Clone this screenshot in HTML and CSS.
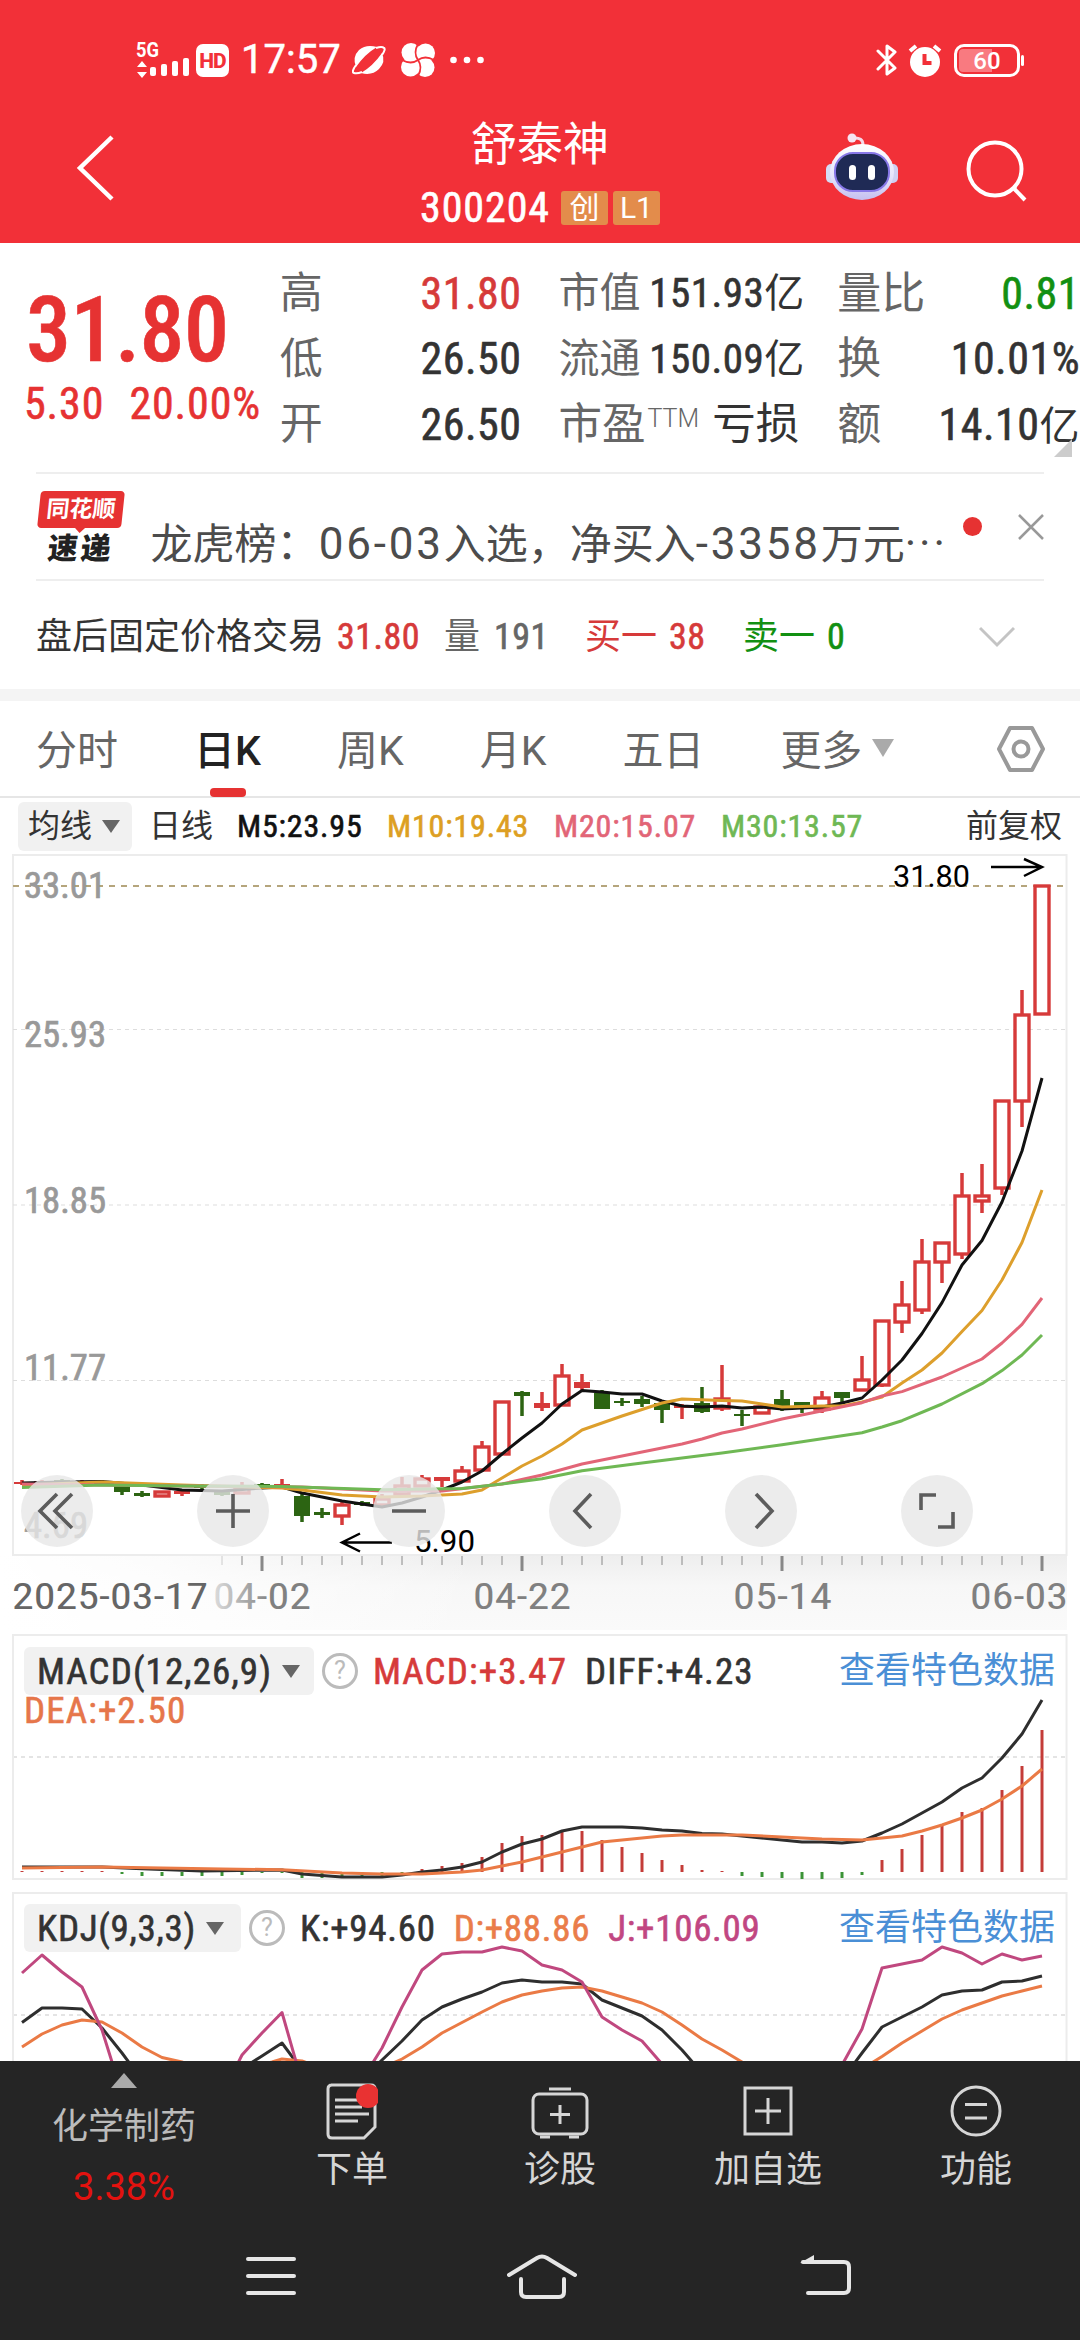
FILE: index.html
```html
<!DOCTYPE html>
<html lang="zh-CN">
<head>
  <meta charset="UTF-8">
  <title>舒泰神 300204</title>
  <link rel="stylesheet" href="styles.css">
</head>
<body>
  <header class="top">
    <div class="status">
      <svg class="signal" width="54" height="38" viewBox="0 0 54 38" fill="#fff">
        <text x="0" y="16" class="net" textLength="23" lengthAdjust="spacingAndGlyphs">5G</text>
        <path d="M6 20l5 6H1zM6 37l5-6H1z"/>
        <rect x="14" y="26" width="6" height="9" rx="2"/><rect x="25" y="23" width="6" height="12" rx="2"/>
        <rect x="36" y="20" width="6" height="15" rx="2"/><rect x="47" y="17" width="6" height="18" rx="2"/>
      </svg>
      <span class="hd">HD</span>
      <span class="clock">17:57</span>
      <svg class="planet" width="34" height="32" viewBox="0 0 34 32" fill="#fff">
        <path d="M4 23Q0 13 7 6Q14 0 25 3Q13 10 4 23z"/>
        <path d="M30 9Q34 18 27 25Q20 32 9 29Q21 22 30 9z"/>
        <path d="M4 21Q-1 28 2 29M30 11Q34 5 32 4Q30 2 24 4M2 29Q5 30 10 28" fill="none" stroke="#fff" stroke-width="2"/>
      </svg>
      <svg class="clover" width="34" height="34" viewBox="0 0 34 34">
        <g fill="#fff"><circle cx="10" cy="9.500" r="9.500"/><circle cx="24.500" cy="10" r="9.500"/><circle cx="24" cy="24.500" r="9.500"/><circle cx="9.500" cy="24" r="9.500"/></g>
        <path d="M17 17Q10 22 1 17M17 17Q12 10 17 1M17 17Q24 12 33 17M17 17Q22 24 17 33" fill="none" stroke="#f23038" stroke-width="1.800"/>
      </svg>
      <svg class="more" width="34" height="8" viewBox="0 0 34 8" fill="#fff"><circle cx="3.500" cy="4" r="3.300"/><circle cx="17" cy="4" r="3.300"/><circle cx="30.500" cy="4" r="3.300"/></svg>
      <svg class="bt" width="22" height="34" viewBox="0 0 22 34" fill="none" stroke="#fff" stroke-width="3" stroke-linejoin="round" stroke-linecap="round"><path d="M2 8L19 25L11 31V3L19 9L2 26"/></svg>
      <svg class="alarm" width="34" height="34" viewBox="0 0 34 34"><circle cx="17" cy="19" r="15" fill="#fff"/><path d="M2 8L8 3M26 3L32 8" stroke="#fff" stroke-width="4"/><path d="M16.500 11V20H23.500" fill="none" stroke="#f23038" stroke-width="4"/></svg>
      <span class="battery"><i></i><b>60</b></span>
    </div>
    <div class="titlebar">
      <svg class="back" width="40" height="66" viewBox="0 0 40 66" fill="none" stroke="#fff" stroke-width="4.500"><path d="M36 2L4 33L36 64"/></svg>
      <div class="title">
        <h1>舒泰神</h1>
        <div class="code"><span class="num">300204</span><em>创</em><em>L1</em></div>
      </div>
      <svg class="robot" width="74" height="68" viewBox="0 0 74 68">
        <defs><linearGradient id="head" x2="0" y2="1"><stop offset="0" stop-color="#fff"/><stop offset=".6" stop-color="#e4e2fb"/><stop offset="1" stop-color="#c5bff0"/></linearGradient></defs>
        <path d="M38 12Q38 4 28 5" fill="none" stroke="#f5d9e8" stroke-width="3"/><circle cx="27" cy="5" r="4.500" fill="#f6e4f2"/>
        <rect x="1" y="31" width="12" height="19" rx="5" fill="#d5dcf5"/><rect x="61" y="31" width="12" height="19" rx="5" fill="#cfd0f3"/>
        <ellipse cx="37" cy="39" rx="32" ry="28" fill="url(#head)"/>
        <rect x="10" y="20" width="54" height="38" rx="18" fill="#1f2a55" stroke="#8878e8" stroke-width="2"/>
        <rect x="24" y="32" width="7" height="15" rx="3.500" fill="#fff"/><rect x="43" y="32" width="7" height="15" rx="3.500" fill="#fff"/>
      </svg>
      <svg class="search" width="62" height="62" viewBox="0 0 62 62" fill="none" stroke="#fff" stroke-width="4"><circle cx="29" cy="29" r="26.500"/><path d="M47.500 48L59 60"/></svg>
    </div>
  </header>

  <section class="quote">
    <div class="last">
      <div class="price num">31.80</div>
      <div class="change num"><span>5.30</span><span>20.00%</span></div>
    </div>
    <dl class="stats s1">
      <dt>高</dt><dd class="num red">31.80</dd>
      <dt>低</dt><dd class="num">26.50</dd>
      <dt>开</dt><dd class="num">26.50</dd>
    </dl>
    <dl class="stats s2">
      <dt>市值</dt><dd class="num">151.93<small>亿</small></dd>
      <dt>流通</dt><dd class="num">150.09<small>亿</small></dd>
      <dt class="pe">市盈<sup>TTM</sup></dt><dd class="loss">亏损</dd>
    </dl>
    <dl class="stats s3">
      <dt>量比</dt><dd class="num green">0.81</dd>
      <dt>换</dt><dd class="num">10.01%</dd>
      <dt>额</dt><dd class="num">14.10<small>亿</small></dd>
    </dl>
    <i class="corner"></i>
  </section>

  <section class="news">
    <div class="logo"><b>同花顺</b><strong>速递</strong></div>
    <p>龙虎榜：<span>06-03</span>入选，净买入<span>-3358</span>万元<span>···</span></p>
    <i class="dot"></i>
    <svg width="26" height="26" viewBox="0 0 26 26" stroke="#999" stroke-width="2.500"><path d="M1 1L25 25M25 1L1 25"/></svg>
  </section>

  <section class="after">
    <span class="name">盘后固定价格交易</span>
    <span class="num red w1">31.80</span>
    <span class="gray w2">量</span><span class="num gray w3">191</span>
    <span class="red w4">买一</span><span class="num red w5">38</span>
    <span class="green w6">卖一</span><span class="num green">0</span>
    <svg width="36" height="22" viewBox="0 0 36 22" fill="none" stroke="#c4c4c4" stroke-width="3"><path d="M1 2L18 19L35 2"/></svg>
  </section>

  <nav class="tabs">
    <a>分时</a><a class="on">日K</a><a>周K</a><a>月K</a><a>五日</a><a>更多<i class="tri"></i></a>
    <svg width="50" height="48" viewBox="0 0 50 48" fill="none" stroke="#999" stroke-width="4"><path d="M14 3H36L47 24L36 45H14L3 24z" stroke-linejoin="round"/><circle cx="25" cy="24" r="7.500"/></svg>
  </nav>

  <div class="ma">
    <span class="chip">均线<i class="tri"></i></span>
    <span class="line">日线</span>
    <span class="num m5">M5:23.95</span><span class="num m10">M10:19.43</span><span class="num m20">M20:15.07</span><span class="num m30">M30:13.57</span>
    <span class="adj">前复权</span>
  </div>

  <div class="kline">
    <svg id="kline" width="1080" height="778" viewBox="0 852 1080 778"></svg>
    <div class="tools">
      <button><svg viewBox="0 0 72 72"><path d="M36 19L19 36L36 53M51 19L34 36L51 53"/></svg></button>
      <button><svg viewBox="0 0 72 72"><path d="M19 36H53M36 19V53"/></svg></button>
      <button><svg viewBox="0 0 72 72"><path d="M19 36H53"/></svg></button>
      <button><svg viewBox="0 0 72 72"><path d="M42 19L26 36L42 53"/></svg></button>
      <button><svg viewBox="0 0 72 72"><path d="M31 19L47 36L31 53"/></svg></button>
      <button><svg viewBox="0 0 72 72"><path d="M20 35V20H35M52 37V52H37"/></svg></button>
    </div>
  </div>

  <section class="panel macd">
    <svg class="plot" id="macd" width="1080" height="248" viewBox="0 1633 1080 248"></svg>
    <div class="legend">
      <span class="chip num">MACD(12,26,9)<i class="tri"></i></span><i class="help">?</i>
      <span class="num red">MACD:+3.47</span><span class="num diff">DIFF:+4.23</span>
      <a>查看特色数据</a>
    </div>
    <div class="num dea">DEA:+2.50</div>
  </section>

  <section class="panel kdj">
    <svg class="plot" id="kdj" width="1080" height="172" viewBox="0 1889 1080 172"></svg>
    <div class="legend">
      <span class="chip num">KDJ(9,3,3)<i class="tri"></i></span><i class="help">?</i>
      <span class="num">K:+94.60</span><span class="num d">D:+88.86</span><span class="num j">J:+106.09</span>
      <a>查看特色数据</a>
    </div>
  </section>

  <footer class="bottom">
    <div class="actions">
      <div class="sector"><i class="up"></i><span>化学制药</span><b>3.38%</b></div>
      <div class="act">
        <svg width="52" height="58" viewBox="0 0 52 58"><path d="M5 2H45Q49 2 49 6V44L38 55H6Q2 55 2 51V6Q2 2 6 2" /><path d="M9 17H34M9 24H36M9 31H43M9 38H32"/><circle cx="42" cy="13" r="12" class="badge"/></svg>
        <span>下单</span>
      </div>
      <div class="act">
        <svg width="60" height="58" viewBox="0 0 60 58"><rect x="3" y="11" width="54" height="40" rx="6"/><path d="M19 6H41M30 22V41M20 31.500H40M10 54H20M39 54H49"/></svg>
        <span>诊股</span>
      </div>
      <div class="act">
        <svg width="52" height="58" viewBox="0 0 52 58"><rect x="3" y="5" width="46" height="46"/><path d="M26 15V41M13 28H39"/></svg>
        <span>加自选</span>
      </div>
      <div class="act">
        <svg width="54" height="58" viewBox="0 0 54 58"><circle cx="27" cy="28" r="24"/><path d="M16 21.500H38M16 35H38"/></svg>
        <span>功能</span>
      </div>
    </div>
    <div class="sysnav">
      <svg width="50" height="44" viewBox="0 0 50 44"><path d="M2 5H48M2 22H48M2 39H48"/></svg>
      <svg width="70" height="46" viewBox="0 0 70 46"><path d="M2 21L30 4Q35 1 40 4L68 21M14 25V38Q14 43 19 43H52Q57 43 57 38V25"/></svg>
      <svg width="54" height="44" viewBox="0 0 54 44"><path d="M5 8H46Q51 8 51 13V34Q51 39 46 39H10"/><path d="M2 9L16 1V10z" class="solid"/></svg>
    </div>
  </footer>

  <script src="chart.js"></script>
</body>
</html>
```
FILE: styles.css
```css
* {
  box-sizing: border-box;
}

body {
  margin: 0;
  width: 1080px;
  height: 2340px;
  overflow: hidden;
  background: #fff;
  color: #333;
  font-family: Roboto, "Noto Sans CJK SC", sans-serif;
  font-size: 36px;
  line-height: 1;
  white-space: nowrap;
}

i, em {
  font-style: normal;
}

svg {
  display: block;
  flex: none;
}

.num {
  font-family: "Roboto Condensed", Roboto, "Noto Sans CJK SC", sans-serif;
  font-weight: 400;
  -webkit-text-stroke: .6px currentColor;
}

.red { color: #d63a3a; }
.green { color: #129012; }
.gray { color: #666; }

/* header */
.top {
  height: 243px;
  background: #f23038;
  color: #fff;
}

.status {
  display: flex;
  align-items: center;
  height: 120px;
  padding: 0 60px 0 136px;
}

.signal { overflow: visible; }

.net {
  font-size: 20px;
  font-weight: 700;
}

.hd {
  width: 33px;
  height: 33px;
  margin-left: 6px;
  border-radius: 7px;
  background: #fff;
  color: #f23038;
  font-size: 21px;
  font-weight: 800;
  line-height: 34px;
  letter-spacing: -1px;
  text-align: center;
}

.clock {
  width: 100px;
  margin-left: 12px;
  font-size: 40px;
  -webkit-text-stroke: .5px #fff;
}

.planet { margin-left: 11px; }
.clover { margin-left: 15px; }
.more { margin-left: 15px; }
.bt { margin-left: auto; }
.alarm { margin-left: 10px; }

.battery {
  position: relative;
  width: 66px;
  height: 33px;
  margin-left: 12px;
  padding: 2px;
  border: 3px solid #fff;
  border-radius: 10px;
}

.battery i {
  display: block;
  width: 33px;
  height: 23px;
  border-radius: 4px 0 0 4px;
  background: #f97a80;
}

.battery b {
  position: absolute;
  inset: 0;
  font-size: 24px;
  font-weight: 500;
  line-height: 28px;
  text-align: center;
}

.battery::after {
  content: "";
  position: absolute;
  right: -7px;
  top: 8px;
  width: 3px;
  height: 11px;
  background: #fff;
  border-radius: 2px;
}

.titlebar {
  display: flex;
  height: 123px;
  padding-left: 76px;
}

.back { margin-top: 15px; }

.title {
  width: 424px;
  margin-left: 212px;
  text-align: center;
}

.title h1 {
  margin: 0;
  font-size: 46px;
  font-weight: 400;
  line-height: 48px;
}

.code {
  display: flex;
  justify-content: center;
  align-items: center;
  margin-top: 19px;
  font-size: 42px;
}

.code em {
  width: 47px;
  height: 34px;
  margin-left: 5px;
  border-radius: 3px;
  background: #e38c4b;
  font-size: 30px;
  line-height: 34px;
}

.code .num {
  margin-right: 6px;
  letter-spacing: .9px;
}

.robot { margin: 13px 0 0 73px; }
.search { margin: 20px 0 0 67px; }

/* quote */
.quote {
  position: relative;
  display: flex;
  height: 229px;
}

.last {
  width: 280px;
  padding: 43px 0 0 26px;
  color: #e63232;
}

.price {
  font-size: 90px;
  font-weight: 500;
  letter-spacing: -.5px;
}

.change {
  display: flex;
  gap: 25px;
  margin-left: -2px;
  margin-top: 6px;
  font-size: 44px;
  letter-spacing: .9px;
}

.stats {
  display: grid;
  grid-template-rows: repeat(3, 65.5px);
  justify-content: space-between;
  align-items: center;
  margin: 18px 0 0;
}

.stats dt {
  color: #666;
  font-size: 43px;
}

.stats dd {
  margin: 0;
  font-size: 44px;
  text-align: right;
}

.stats .num { letter-spacing: .5px; }

.stats small {
  font-size: 40px;
  -webkit-text-stroke: 0;
}

.s1 {
  width: 242px;
  grid-template-columns: 50px 110px;
}

.s2 {
  width: 241px;
  margin-left: 37px;
  grid-template-columns: 80px 150px;
}

.s2 dt { font-size: 41px; }
.s2 dd { font-size: 41px; }

.stats .pe, .stats .loss { font-size: 43.5px; }

.pe sup {
  margin-left: 2px;
  font-size: 25px;
  font-weight: 300;
  vertical-align: 12px;
  line-height: 0;
}

.s3 {
  width: 243px;
  margin-left: 38px;
  grid-template-columns: 90px 150px;
}

.s3 dt { font-size: 44px; }

.corner {
  position: absolute;
  right: 8px;
  bottom: 15px;
  border-left: 18px solid transparent;
  border-bottom: 18px solid #ccc;
}

/* news line */
.news {
  display: flex;
  height: 109px;
  margin: 0 36px;
  border-top: 2px solid #eee;
  border-bottom: 2px solid #eee;
}

.logo {
  width: 90px;
  padding-top: 17px;
  text-align: center;
}

.logo b {
  position: relative;
  display: block;
  width: 84px;
  height: 37px;
  margin-left: 3px;
  border-radius: 4px;
  background: #e63232;
  color: #fff;
  font-size: 23px;
  font-weight: 700;
  line-height: 37px;
  transform: skewX(-6deg);
}

.logo b::after {
  content: "";
  position: absolute;
  left: 37px;
  top: 36px;
  border: 6px solid transparent;
  border-top-color: #e63232;
}

.logo strong {
  display: block;
  margin-top: 6px;
  color: #222;
  font-size: 30px;
  font-weight: 900;
  letter-spacing: 3px;
  transform: skewX(-6deg);
}

.news p {
  width: 803px;
  margin: 48px 0 0 25px;
  color: #4c4c4c;
  font-size: 42px;
}

.news p span {
  font-size: 44px;
  letter-spacing: 2.8px;
}

.dot {
  width: 19px;
  height: 19px;
  margin: 43px 0 0 13px;
  border-radius: 50%;
  background: #e63232;
}

.news svg { margin: 40px 0 0 36px; }

/* after-hours line */
.after {
  display: flex;
  align-items: center;
  height: 120px;
  padding: 4px 65px 0 36px;
  border-bottom: 12px solid #f4f4f4;
}

.after .num { letter-spacing: .5px; }
.name { width: 301px; }
.w1 { width: 107px; }
.w2 { width: 50px; }
.w3 { width: 91px; }
.w4 { width: 84px; }
.w5 { width: 74px; }
.w6 { width: 84px; }
.after svg { margin-left: auto; }

/* tabs */
.tabs {
  display: flex;
  align-items: center;
  height: 97px;
  padding: 0 34px 0 36px;
  border-bottom: 2px solid #e6e6e6;
  color: #666;
  font-size: 41px;
}

.tabs a {
  position: relative;
  top: 3px;
  margin-right: 76px;
}

.tabs .on {
  color: #222;
  font-weight: 500;
}

.tabs .on::after {
  content: "";
  position: absolute;
  left: 16px;
  bottom: -25px;
  width: 36px;
  height: 9px;
  border-radius: 4px;
  background: #e63232;
}

.tabs svg { margin-left: auto; }

.tri {
  display: inline-block;
  margin-left: 10px;
  border: 9px solid transparent;
  border-top: 13px solid #666;
  border-bottom: 0;
  vertical-align: 6px;
}

.tabs a:nth-of-type(6) { margin-right: 0; }

.tabs .tri {
  border-width: 18px 11px 0;
  border-top-color: #aaa;
  vertical-align: 8px;
}

/* moving average row */
.ma {
  display: flex;
  align-items: center;
  height: 54px;
  padding: 2px 18px 0;
  font-size: 32px;
}

.chip {
  display: flex;
  align-items: center;
  height: 49px;
  border-radius: 6px;
  background: #f1f1f1;
}

.ma .chip {
  width: 114px;
  padding-left: 10px;
}

.line { margin: 0 24px 0 17px; }

.ma .num {
  width: 167px;
  letter-spacing: .8px;
}

.ma .m5 { width: 150px; color: #111; }
.m10 { color: #dd9f22; }
.m20 { color: #e26577; }
.m30 { color: #6fb854; }
.adj { margin-left: auto; }

/* candles */
.kline {
  position: relative;
  height: 778px;
}

.tools {
  position: absolute;
  left: 21px;
  top: 623px;
  display: flex;
  gap: 104px;
}

.tools button {
  width: 72px;
  height: 72px;
  padding: 0;
  border: 0;
  border-radius: 50%;
  background: rgba(231, 231, 231, .8);
}

.tools path {
  fill: none;
  stroke: #5c5c5c;
  stroke-width: 3.6;
}

.axis { font-size: 37px; fill: #999; stroke: #999; stroke-width: .7; }
.date { font-size: 36px; fill: #808080; }
.mark { font-family: Roboto, sans-serif; font-size: 31px; fill: #000; }
.ln { fill: none; stroke-width: 3; stroke-linejoin: round; }

/* indicator panels */
.panel {
  position: relative;
  height: 248px;
  margin-top: 3px;
  font-size: 37px;
}

.panel .num { letter-spacing: 1.1px; }

.plot {
  position: absolute;
  left: 0;
  top: 0;
}

.legend {
  position: relative;
  display: flex;
  align-items: center;
  height: 48px;
  padding: 0 25px 0 24px;
}

.macd .legend { top: 14px; }

.legend .chip {
  width: 290px;
  height: 48px;
  padding-left: 13px;
}

.kdj .chip { width: 217px; }

.help {
  width: 36px;
  height: 36px;
  margin: 0 15px 0 8px;
  border: 3px solid #bbb;
  border-radius: 50%;
  color: #bbb;
  font-size: 25px;
  line-height: 30px;
  text-align: center;
}

.legend > .num + .num { margin-left: 18px; }

.legend a {
  margin-left: auto;
  color: #4a8fd6;
  font-size: 36px;
}

.dea {
  position: relative;
  padding: 11px 0 0 24px;
  color: #e6764a;
}

.kdj {
  height: 172px;
  margin-top: 8px;
  padding-top: 15px;
}

.kdj .num { letter-spacing: .7px; }
.legend .d { color: #ea7d4a; }
.legend .j { color: #c14782; }

/* bottom bar */
.bottom {
  height: 279px;
  background: #252525;
  color: #d6d6d6;
}

.actions {
  display: flex;
  height: 180px;
}

.sector {
  display: flex;
  flex-direction: column;
  align-items: center;
  width: 248px;
  padding-top: 12px;
  color: #bbb;
}

.sector span { margin-top: 21px; }

.sector b {
  margin-top: 23px;
  color: #e3120f;
  font-size: 38px;
  font-weight: 400;
}

.up {
  border: 13px solid transparent;
  border-top: 0;
  border-bottom: 15px solid #aaa;
}

.act {
  display: flex;
  flex-direction: column;
  align-items: center;
  width: 208px;
  padding-top: 22px;
}

.act svg { margin-bottom: 11px; }

.bottom svg {
  fill: none;
  stroke: #d6d6d6;
  stroke-width: 3;
}

.bottom .badge {
  fill: #e93232;
  stroke: none;
}

.sysnav {
  display: flex;
  padding: 13px 0 0 246px;
}

.sysnav svg {
  stroke: #e6e6e6;
  stroke-width: 4;
  stroke-linecap: round;
}

.sysnav svg + svg { margin-left: 211px; }
.sysnav svg:last-child { margin-left: 221px; }
.sysnav .solid { fill: #e6e6e6; stroke: none; }
```
FILE: chart.js
```js
const RED = "#d63a3a", GREEN = "#2c6412";
const x = i => 22 + i * 20;

// [index, body top, body bottom, high, low, colour, filled]
const candles = [
  [0,1482,1484,1480,1485,"r",1],[1,1481,1484,1480,1484,"r",1],[2,1480,1482,1479,1483,"g"],[3,1481,1483,1480,1484,"r",1],[4,1481,1484,1480,1485,"g"],
  [5,1486,1492,1484,1495,"g"],[6,1493,1496,1491,1497,"g"],[7,1492,1496,1491,1497,"r"],[8,1491,1494,1490,1496,"r",1],[9,1485,1488,1484,1489,"g"],
  [10,1492,1495,1491,1496,"g"],[11,1488,1493,1482,1494,"r"],[12,1484,1487,1483,1488,"g"],[13,1484,1487,1479,1488,"r",1],[14,1496,1516,1493,1522,"g"],
  [15,1512,1515,1508,1518,"g"],[16,1505,1516,1502,1525,"r"],[17,1502,1505,1501,1506,"g"],[18,1499,1505,1494,1506,"r"],[19,1486,1494,1477,1496,"r"],
  [20,1479,1486,1475,1487,"r"],[21,1477,1481,1477,1487,"r",1],[22,1471,1481,1466,1482,"r"],[23,1447,1470,1441,1471,"r"],[24,1402,1454,1402,1454,"r"],
  [25,1392,1396,1391,1416,"g"],[26,1403,1408,1392,1411,"r",1],[27,1376,1405,1364,1405,"r"],[28,1382,1388,1374,1390,"r",1],[29,1393,1409,1390,1409,"g"],
  [30,1401,1403,1398,1406,"g"],[31,1399,1404,1396,1407,"g"],[32,1403,1410,1402,1423,"g"],[33,1405,1408,1404,1419,"r",1],[34,1403,1412,1387,1413,"g"],
  [35,1399,1408,1365,1411,"r"],[36,1414,1416,1410,1426,"g"],[37,1407,1413,1405,1413,"r"],[38,1399,1406,1390,1411,"g"],[39,1402,1407,1402,1413,"g"],
  [40,1398,1409,1391,1413,"r"],[41,1392,1398,1392,1402,"g"],[42,1380,1390,1356,1390,"r"],[43,1321,1385,1321,1387,"r"],[44,1305,1322,1281,1333,"r"],
  [45,1262,1310,1239,1314,"r"],[46,1243,1262,1243,1283,"r"],[47,1196,1254,1173,1259,"r"],[48,1196,1201,1164,1213,"r"],[49,1101,1188,1101,1195,"r"],
  [50,1015,1101,990,1127,"r"],[51,886,1014,886,1014,"r"]
];

const ma5 = [[0,1483],[2,1482],[4,1481.5],[6,1485],[8,1490],[10,1491],[12,1488],[13,1487],[14,1493],[15,1497],[16,1501],[17,1504],[18,1507],[19,1503],[20,1497],[21,1490],[22,1482],[23,1471],[24,1454],[25,1438],[26,1423],[27,1404],[28,1390.5],[29,1392],[30,1394],[31,1394],[32,1401],[33,1406],[34,1407],[35,1406],[36,1408],[37,1407],[38,1409],[39,1408],[40,1407],[41,1403],[42,1398],[43,1380],[44,1360],[45,1333.5],[46,1302.6],[47,1265],[48,1240.5],[49,1202],[50,1151],[51,1078]];
const ma10 = [[0,1485],[4,1482],[8,1485],[13,1488],[14,1490],[16,1495],[18,1497],[20,1496],[22,1494],[23,1490],[24,1478],[25,1466],[26,1456],[27,1444],[28,1430],[30,1416],[32,1403],[33,1399],[35,1400.5],[36,1401],[37,1404],[38,1407],[40,1406],[41,1406],[42,1402],[43,1397],[44,1383],[45,1370],[46,1353],[47,1331.5],[48,1310.5],[49,1280],[50,1242.5],[51,1190]];
const ma20 = [[0,1484],[8,1486],[14,1487],[18,1491],[21,1491],[24,1484],[26,1475],[28,1464],[31,1452],[33,1444],[34,1439],[35,1433],[36,1429],[38,1419],[42,1402.7],[43,1396],[44,1391.6],[46,1377],[48,1359],[49,1343],[50,1324.4],[51,1298]];
const ma30 = [[0,1487.5],[4,1485],[8,1486],[13,1486.5],[18,1489.7],[22,1488.6],[24,1484],[26,1478.7],[28,1470.7],[31,1463],[35,1453],[38,1444.7],[42,1432.7],[43,1427],[44,1420.7],[46,1404],[48,1383.7],[49,1370.6],[50,1355],[51,1335]];

function line(points, color) {
  return `<polyline class="ln" stroke="${color}" points="${points.map(p => x(p[0]) + "," + p[1]).join(" ")}"/>`;
}

function label(cls, lx, y, width, text, extra = "") {
  return `<text class="${cls}" x="${lx}" y="${y}" textLength="${width}" lengthAdjust="spacingAndGlyphs" ${extra}>${text}</text>`;
}

function drawKline() {
  let s = `<defs>
    <linearGradient id="fade" x2="0" y2="1"><stop offset="0" stop-color="#eee"/><stop offset=".4" stop-color="#f7f7f7"/><stop offset="1" stop-color="#fafafa"/></linearGradient>
    <linearGradient id="white" x1="0" x2="1"><stop offset="0" stop-color="#fff"/><stop offset=".15" stop-color="#fff" stop-opacity=".8"/><stop offset=".45" stop-color="#fff" stop-opacity="0"/></linearGradient>
    <linearGradient id="txt" x1="0" x2="1"><stop offset="0" stop-color="#ddd"/><stop offset=".6" stop-color="#808080"/></linearGradient></defs>
    <rect x="0" y="1556" width="1067" height="74" fill="url(#fade)"/><rect x="0" y="1556" width="1067" height="74" fill="url(#white)"/>
    <rect x="13" y="855" width="1053.5" height="700" fill="#fff" stroke="#ececec" stroke-width="2"/>
    <path d="M13 886H1066" stroke="#b5a57c" stroke-width="2" stroke-dasharray="6 6"/>
    <path d="M13 1029.500H1066M13 1205H1066M13 1380.500H1066" stroke="#ddd" stroke-dasharray="4 4"/>`;
  [["33.01",898],["25.93",1047],["18.85",1213],["11.77",1380],["4.69",1538]].forEach(([t, y]) => {
    s += label("num axis", 24, y, t.length > 4 ? 82 : 64, t);
  });
  candles.forEach(([i, top, bottom, high, low, c, filled]) => {
    const color = c === "r" ? RED : GREEN;
    const solid = filled || c === "g";
    s += `<path d="M${x(i)} ${high}V${top}M${x(i)} ${bottom}V${low}" stroke="${color}" stroke-width="3.500"/>`;
    s += solid
      ? `<rect x="${x(i) - 8}" y="${top}" width="16" height="${bottom - top}" fill="${color}"/>`
      : `<rect x="${x(i) - 7}" y="${top}" width="14" height="${bottom - top}" fill="#fff" stroke="${color}" stroke-width="3.400"/>`;
  });
  s += line(ma5, "#111") + line(ma10, "#dd9f2c") + line(ma20, "#e26577") + line(ma30, "#6fb854");
  s += label("mark", 893, 887, 77, "31.80") + label("mark", 414, 1552, 61, "5.90");
  s += `<path d="M991 867H1041M1024 859L1042 867L1024 876M392 1542.500H343M360 1533.500L342 1542.500L360 1551.500" fill="none" stroke="#000" stroke-width="2.500"/>`;
  for (let i = 10; i < 52; i++) {
    const major = i === 12 || i === 25 || i === 38 || i === 51;
    s += `<path d="M${x(i)} 1556V${major ? 1571 : 1565}" stroke="${i < 11 ? "#ccc" : "#888"}" stroke-width="${major ? 3 : 1}"/>`;
  }
  s += label("num date", 12, 1609, 196, "2025-03-17", 'style="fill:#666"') + label("num date", 213, 1609, 98, "04-02", 'style="fill:url(#txt);-webkit-text-stroke:0"')
    + label("num date", 473, 1609, 98, "04-22") + label("num date", 733, 1609, 99, "05-14") + label("num date", 970, 1609, 98, "06-03");
  document.getElementById("kline").innerHTML = s;
}

const diff = [[0,1867],[4,1867],[6,1868.7],[9,1871],[13,1870],[14,1874],[16,1877],[18,1877],[19,1875],[20,1872],[21,1870],[22,1867],[23,1862],[24,1852],[25,1844],[26,1839],[27,1831],[28,1827],[30,1827],[31,1828],[32,1830],[33,1831],[34,1833.5],[35,1834],[36,1836],[38,1840],[39,1842],[40,1842],[41,1843],[42,1841],[43,1833],[44,1824],[45,1813],[46,1802],[47,1788],[48,1778],[49,1758],[50,1734],[51,1700]];
const dea = [[0,1868],[4,1867],[10,1869],[13,1869.7],[16,1873],[18,1874],[20,1874],[22,1872],[23,1870],[24,1866],[25,1862],[26,1857],[27,1852],[28,1847],[29,1842],[30,1840],[32,1836],[33,1835],[36,1835],[40,1839],[42,1840],[43,1838],[44,1836],[45,1831],[46,1825],[47,1818],[48,1810],[49,1799],[50,1786],[51,1769]];
// bar heights above (+) or below (-) the zero line at 1872
const bars = [1,1,1,1,1,-2,-4,-4,-4,-4,-4,-3,-1,-1,-6,-6,-6,-5,-5,-3,3,6,9,15,29,36,37,41,41,32,25,19,12,7,2,1,-4,-5,-6,-7,-7,-6,-3,12,23,37,47,60,64,82,106,142];

function drawMacd() {
  let s = `<path d="M13 1757H1066" stroke="#e4e4e4" stroke-width="2" stroke-dasharray="4 4"/>
    <rect x="13" y="1635" width="1053.5" height="244" fill="none" stroke="#ececec" stroke-width="2"/>`;
  bars.forEach((h, i) => {
    s += `<path d="M${x(i)} 1872V${1872 - h}" stroke="${h > 0 ? "#c43c38" : "#3b9336"}" stroke-width="3"/>`;
  });
  document.getElementById("macd").innerHTML = s + line(diff, "#2e2e2e") + line(dea, "#ea7a45");
}

const j = [[0,1973],[1,1955],[2,1972],[3,1987],[4,2030],[4.5,2062],[5,2095],[10,2095],[11,2055],[12,2033],[13,2012.5],[13.75,2065],[14,2095],[17,2080],[18,2048],[19,2007],[20,1970],[21,1954],[22,1952],[23,1952],[24,1947],[25,1951],[26,1965],[27,1970],[28,1982],[29,2017],[30,2030],[31,2041],[32,2064],[33,2095],[40,2095],[41,2065],[42,2029],[43,1968],[44,1964],[45,1960],[46,1947],[47,1953],[48,1964],[49,1954],[50,1960],[51,1956]];
const k = [[0,2022.5],[1,2008],[2,2008],[3,2009],[4,2028],[5,2053],[6,2080],[10.500,2075],[12,2056],[13,2043],[14,2070],[17,2080],[18,2060],[19,2041],[20,2020],[21,2007],[22,1999],[23,1992],[24,1983],[25,1980],[26,1982],[27,1982],[28,1984],[29,2000],[30,2008],[31,2016],[32,2030],[33,2050],[34,2073],[41,2080],[42,2053],[43,2027],[44,2017],[45,2007],[46,1995],[47,1991],[48,1990],[49,1982],[50,1981],[51,1976]];
const d = [[0,2047],[1,2034],[2,2025],[3,2020],[4,2022],[5,2033],[6,2047],[7,2057.5],[8,2062],[10,2075],[12.500,2062],[13,2059],[14,2061],[15,2068],[18,2068],[19,2059],[20,2047],[21,2033],[22,2022.5],[23,2012],[24,2002],[25,1995],[26,1991],[27,1988],[28,1987],[29,1991],[30,1997],[31,2003],[32,2012],[33,2025],[34,2039],[35,2050],[36,2062],[38,2090],[41,2085],[42,2069],[43,2056.5],[44,2043],[45,2031],[46,2019],[47,2010],[48,2003],[49,1996],[50,1991],[51,1986]];

function drawKdj() {
  document.getElementById("kdj").innerHTML =
    `<path d="M13 2015H1066" stroke="#e4e4e4" stroke-width="2" stroke-dasharray="4 4"/>
    <rect x="13" y="1893" width="1053.5" height="244" fill="none" stroke="#ececec" stroke-width="2"/>`
    + line(k, "#2e2e2e") + line(d, "#ea7a45") + line(j, "#c0487f");
}

drawKline();
drawMacd();
drawKdj();
```
